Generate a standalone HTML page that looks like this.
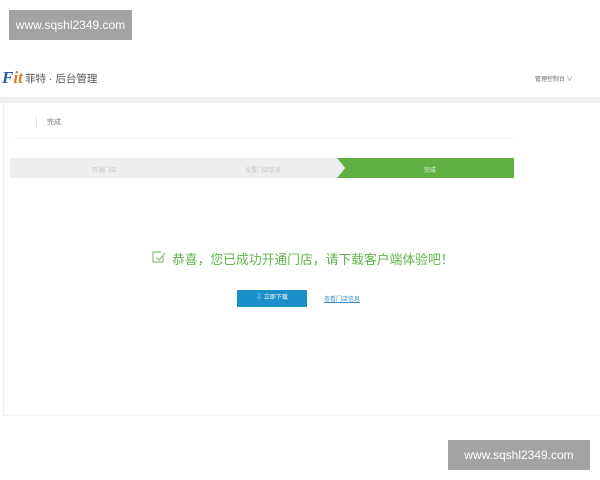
<!DOCTYPE html>
<html><head><meta charset="utf-8"><style>
body{margin:0;width:600px;height:480px;background:#fff;position:relative;overflow:hidden;font-family:"Liberation Sans","Noto Sans CJK SC",sans-serif}
.wm{position:absolute;background:#a3a3a3;color:#fff;font-size:12px;line-height:30px;text-align:center}
.a{position:absolute}
</style></head><body>
<div class="wm" style="left:9px;top:10px;width:123px;height:30px">www.sqshl2349.com</div>
<div class="a" style="left:2px;top:68px;font:italic bold 17px 'Liberation Serif',serif;color:#2a5fa8">F<span style="color:#e07a2a">it</span></div>
<div class="a" style="left:25px;top:71px;font-size:10.5px;color:#555">菲特 · 后台管理</div>
<div class="a" style="left:535px;top:74px;font-size:6px;color:#666">管理控制台 ∨</div>
<div class="a" style="left:0;top:97px;width:600px;height:6px;background:#efefef"></div>
<div class="a" style="left:3px;top:103px;width:1px;height:312px;background:#eee"></div>
<div class="a" style="left:3px;top:415px;width:597px;height:1px;background:#f0f0f0"></div>
<div class="a" style="left:36px;top:116px;width:1px;height:12px;background:#e5e5e5"></div>
<div class="a" style="left:47px;top:117px;font-size:7px;color:#777">完成</div>
<div class="a" style="left:14px;top:138px;width:500px;height:1px;background:#f0f0f0"></div>
<div class="a" style="left:10px;top:158px;width:330px;height:20px;background:#eeeeee"></div>
<svg class="a" style="left:330px;top:158px" width="184" height="20"><polygon points="7,0 184,0 184,20 7,20 15,10" fill="#5fb041"/><polygon points="0,0 7,0 15,10 7,20 0,20" fill="#eeeeee"/></svg>
<div class="a" style="left:92px;top:165px;font-size:6px;color:#c4c4c4">开通门店</div>
<div class="a" style="left:245px;top:165px;font-size:6px;color:#c4c4c4">设置门店信息</div>
<div class="a" style="left:424px;top:165px;font-size:6px;color:#e8f5e0">完成</div>
<svg class="a" style="left:152px;top:250px" width="14" height="14"><path d="M11 6v6H1V2h8M4 7l3 3 6-7" fill="none" stroke="#8bc27a" stroke-width="1.2"/></svg>
<div class="a" style="left:172px;top:249px;font-size:12.8px;color:#62b34a;white-space:nowrap">恭喜，您已成功开通门店，请下载客户端体验吧！</div>
<div class="a" style="left:237px;top:290px;width:70px;height:17px;background:#1a8fc9;color:#fff;font-size:6px;line-height:17px;text-align:center">⇩ 立即下载</div>
<div class="a" style="left:324px;top:294px;font-size:6px;color:#3a8fd0;text-decoration:underline">查看门店信息</div>
<div class="wm" style="left:448px;top:440px;width:142px;height:30px">www.sqshl2349.com</div>
</body></html>
